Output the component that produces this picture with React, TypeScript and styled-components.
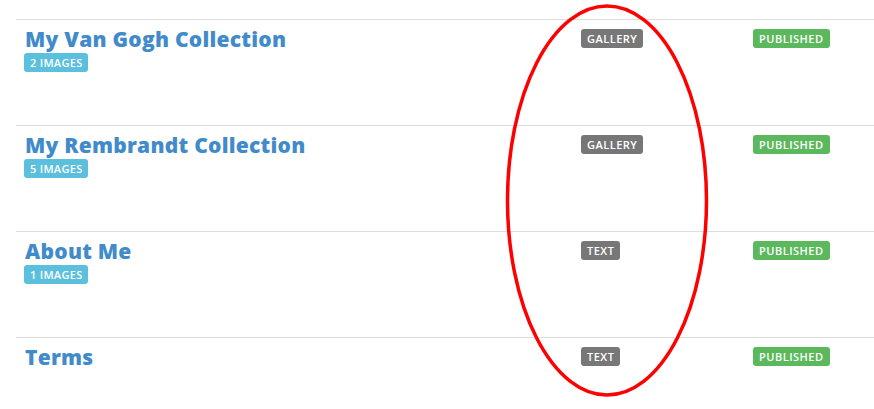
import React from "react";
import styled, { createGlobalStyle } from "styled-components";

const Global = createGlobalStyle`
  html, body { margin: 0; padding: 0; background: #fff; }
  body { font-family: "Open Sans", "Liberation Sans", sans-serif; }
`;

const Page = styled.div`
  position: relative;
  width: 874px;
  height: 409px;
  overflow: hidden;
  padding: 19px 0 0 16px;
  box-sizing: border-box;
`;

const Table = styled.div`
  display: flex;
  flex-direction: column;
  width: 858px;
`;

const Row = styled.div`
  display: grid;
  grid-template-columns: 557px 172px 1fr;
  height: 106px;
  border-top: 1px solid #dddddd;
  box-sizing: border-box;
`;

const Cell = styled.div`
  padding: 9px 8px 8px 8px;
  display: flex;
  flex-direction: column;
  align-items: flex-start;
`;

const Title = styled.a`
  font-family: "Open Sans", "Liberation Sans", sans-serif;
  font-weight: 800;
  font-size: 21px;
  line-height: 20px;
  color: #428bca;
  text-decoration: none;
  letter-spacing: 0.25px;
  margin-left: 1px;
`;

const Badge = styled.span<{ $bg: string }>`
  display: inline-block;
  background: ${(p) => p.$bg};
  color: #fff;
  font-family: "Open Sans", "Liberation Sans", sans-serif;
  font-weight: 600;
  font-size: 11px;
  line-height: 19px;
  height: 19px;
  padding: 0 6px;
  border-radius: 3px;
  letter-spacing: 0.5px;
  white-space: nowrap;
`;

const Count = styled(Badge)`
  margin-top: 4px;
  letter-spacing: 0.3px;
`;

const Circle = styled.svg`
  position: absolute;
  left: 0;
  top: 0;
  pointer-events: none;
`;

const items = [
  { title: "My Van Gogh Collection", images: "2 IMAGES", type: "GALLERY" },
  { title: "My Rembrandt Collection", images: "5 IMAGES", type: "GALLERY" },
  { title: "About Me", images: "1 IMAGES", type: "TEXT" },
  { title: "Terms", images: null, type: "TEXT" },
];

export default function App() {
  return (
    <Page>
      <Global />
      <Table>
        {items.map((it) => (
          <Row key={it.title}>
            <Cell>
              <Title href="#">{it.title}</Title>
              {it.images && <Count $bg="#5bc0de">{it.images}</Count>}
            </Cell>
            <Cell>
              <Badge $bg="#777777">{it.type}</Badge>
            </Cell>
            <Cell>
              <Badge $bg="#5cb85c">PUBLISHED</Badge>
            </Cell>
          </Row>
        ))}
      </Table>
      <Circle width="874" height="409" viewBox="0 0 874 409">
        <ellipse cx="607" cy="200.5" rx="99.5" ry="194.5" fill="none" stroke="#ff0000" strokeWidth="3.5" />
      </Circle>
    </Page>
  );
}
